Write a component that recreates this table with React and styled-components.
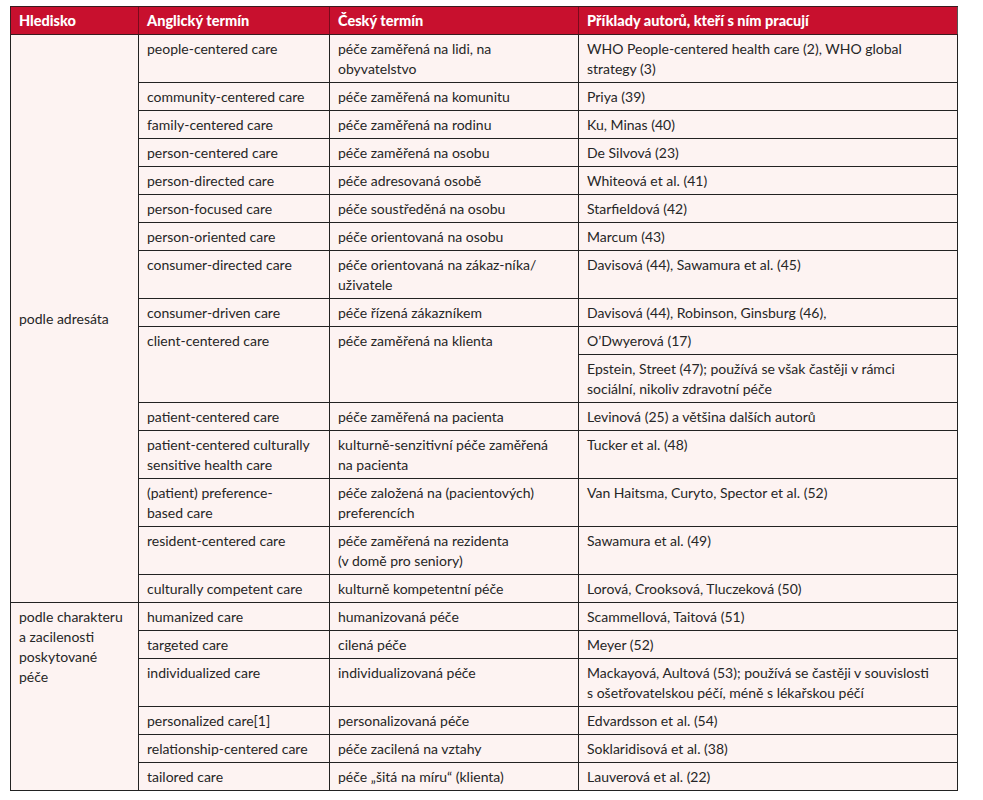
import React from 'react';
import styled, { createGlobalStyle } from 'styled-components';

const GlobalStyle = createGlobalStyle`
  body {
    margin: 0;
    background: #fff;
    font-family: Lato, "Open Sans", sans-serif;
  }
`;

const Page = styled.div`
  padding: 6px 0 0 10px;
`;

const Table = styled.table`
  width: 947px;
  border-collapse: collapse;
  table-layout: fixed;
  font-size: 14px;
  line-height: 20px;
  color: #262626;
  border-right: 1px solid #555;
`;

const HeadCell = styled.th`
  background: #c8102e;
  color: #fff;
  font-size: 14.5px;
  font-weight: 900;
  text-align: left;
  padding: 4px 8px 3px;
  border-top: 1px solid #3a1b1f;
  border-bottom: 1px solid #3a1b1f;
  border-left: 1px solid #7a0a1b;
  white-space: nowrap;

  &:first-child {
    border-left: 1px solid #3a1b1f;
  }
`;

const Cell = styled.td`
  background: #fdf3f2;
  padding: 4px 8px 3px;
  border: 1px solid #222;
  vertical-align: ${({ $middle }) => ($middle ? 'middle' : 'top')};
  white-space: pre;
  overflow: hidden;
`;

const columns = [
  { title: 'Hledisko', width: 128 },
  { title: 'Anglický termín', width: 191 },
  { title: 'Český termín', width: 249 },
  { title: 'Příklady autorů, kteří s ním pracují', width: 379 },
];

const addressee = [
  ['people-centered care', 'péče zaměřená na lidi, na\nobyvatelstvo', 'WHO People-centered health care (2), WHO global\nstrategy (3)'],
  ['community-centered care', 'péče zaměřená na komunitu', 'Priya (39)'],
  ['family-centered care', 'péče zaměřená na rodinu', 'Ku, Minas (40)'],
  ['person-centered care', 'péče zaměřená na osobu', 'De Silvová (23)'],
  ['person-directed care', 'péče adresovaná osobě', 'Whiteová et al. (41)'],
  ['person-focused care', 'péče soustředěná na osobu', 'Starfieldová (42)'],
  ['person-oriented care', 'péče orientovaná na osobu', 'Marcum (43)'],
  ['consumer-directed care', 'péče orientovaná na zákaz-níka/\nuživatele', 'Davisová (44), Sawamura et al. (45)'],
  ['consumer-driven care', 'péče řízená zákazníkem', 'Davisová (44), Robinson, Ginsburg (46),'],
  ['client-centered care', 'péče zaměřená na klienta', 'O’Dwyerová (17)', 'Epstein, Street (47); používá se však častěji v rámci\nsociální, nikoliv zdravotní péče'],
  ['patient-centered care', 'péče zaměřená na pacienta', 'Levinová (25) a většina dalších autorů'],
  ['patient-centered culturally\nsensitive health care', 'kulturně-senzitivní péče zaměřená\nna pacienta', 'Tucker et al. (48)'],
  ['(patient) preference-\nbased care', 'péče založená na (pacientových)\npreferencích', 'Van Haitsma, Curyto, Spector et al. (52)'],
  ['resident-centered care', 'péče zaměřená na rezidenta\n(v domě pro seniory)', 'Sawamura et al. (49)'],
  ['culturally competent care', 'kulturně kompetentní péče', 'Lorová, Crooksová, Tluczeková (50)'],
];

const character = [
  ['humanized care', 'humanizovaná péče', 'Scammellová, Taitová (51)'],
  ['targeted care', 'cilená péče', 'Meyer (52)'],
  ['individualized care', 'individualizovaná péče', 'Mackayová, Aultová (53); používá se častěji v souvislosti\ns ošetřovatelskou péčí, méně s lékařskou péčí'],
  ['personalized care[1]', 'personalizovaná péče', 'Edvardsson et al. (54)'],
  ['relationship-centered care', 'péče zacilená na vztahy', 'Soklaridisová et al. (38)'],
  ['tailored care', 'péče „šitá na míru“ (klienta)', 'Lauverová et al. (22)'],
];

const countRows = (rows) => rows.reduce((n, r) => n + (r[3] ? 2 : 1), 0);

const renderGroup = (label, rows, middle) => {
  const span = countRows(rows);
  const out = [];

  rows.forEach(([en, cz, authors, extra], i) => {
    out.push(
      <tr key={`${label}-${i}`}>
        {i === 0 && (
          <Cell rowSpan={span} $middle={middle}>
            {label}
          </Cell>
        )}
        <Cell rowSpan={extra ? 2 : 1}>{en}</Cell>
        <Cell rowSpan={extra ? 2 : 1}>{cz}</Cell>
        <Cell>{authors}</Cell>
      </tr>
    );

    if (extra) {
      out.push(
        <tr key={`${label}-${i}-extra`}>
          <Cell>{extra}</Cell>
        </tr>
      );
    }
  });

  return out;
};

const App = () => (
  <Page>
    <GlobalStyle />
    <Table>
      <colgroup>
        {columns.map(({ title, width }) => (
          <col key={title} style={{ width }} />
        ))}
      </colgroup>
      <thead>
        <tr>
          {columns.map(({ title }) => (
            <HeadCell key={title}>{title}</HeadCell>
          ))}
        </tr>
      </thead>
      <tbody>
        {renderGroup('podle adresáta', addressee, true)}
        {renderGroup('podle charakteru\na zacilenosti\nposkytované\npéče', character, false)}
      </tbody>
    </Table>
  </Page>
);

export default App;
